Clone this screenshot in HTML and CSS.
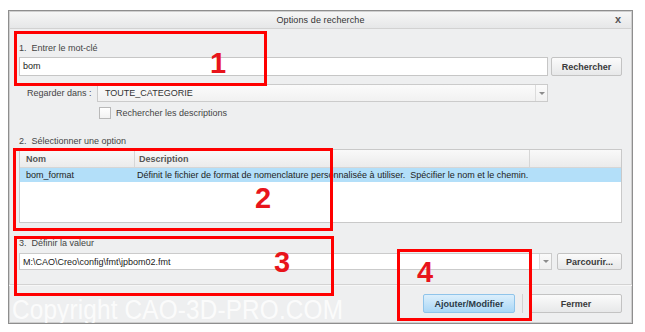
FILE: index.html
```html
<!DOCTYPE html>
<html lang="fr">
<head>
<meta charset="utf-8" />
<title>Options de recherche</title>
<link rel="stylesheet" href="styles.css">
</head>
<body>
<div class="page">
  <div class="dlg">
    <div class="titlebar">
      <span class="title">Options de recherche</span>
      <span class="close">x</span>
    </div>
    <div class="body">
      <div class="step">1.&nbsp; Entrer le mot-clé</div>
      <div class="row">
        <div class="field grow">bom</div>
        <div class="btn search">Rechercher</div>
      </div>
      <div class="row look">
        <span class="lbl">Regarder dans :</span>
        <div class="combo grow"><span class="val">TOUTE_CATEGORIE</span><span class="arrow"></span></div>
      </div>
      <div class="check"><span class="box"></span>Rechercher les descriptions</div>

      <div class="step s2">2.&nbsp; Sélectionner une option</div>
      <div class="table">
        <div class="thead">
          <span class="c1">Nom</span><span class="c2">Description</span><span class="c3"></span>
        </div>
        <div class="tr sel">
          <span class="c1">bom_format</span><span class="c2">Définit le fichier de format de nomenclature personnalisée à utiliser.&nbsp; Spécifier le nom et le chemin.</span>
        </div>
      </div>

      <div class="step s3">3.&nbsp; Définir la valeur</div>
      <div class="row value">
        <div class="combo white grow"><span class="val">M:\CAO\Creo\config\fmt\jpbom02.fmt</span><span class="arrow"></span></div>
        <div class="btn browse">Parcourir...</div>
      </div>

      <div class="sep"></div>
      <div class="footer">
        <div class="btn primary">Ajouter/Modifier</div>
        <span class="vsep"></span>
        <div class="btn">Fermer</div>
      </div>
    </div>
    <div class="watermark">Copyright CAO-3D-PRO.COM</div>
  </div>

  <!-- annotations -->
  <div class="mark m1"></div>
  <div class="mark m2"></div>
  <div class="mark m3"></div>
  <div class="mark m4"></div>
  <span class="num n1">1</span>
  <span class="num n2">2</span>
  <span class="num n3">3</span>
  <span class="num n4">4</span>
</div>
</body>
</html>
```

FILE: styles.css
```css
body { margin: 0; background: #fff; font-family: "Liberation Sans", Arial, sans-serif; font-size: 9px; color: #333; }
.page { position: relative; width: 645px; height: 332px; padding: 10px 0 0 8px; box-sizing: border-box; }

.dlg { position: relative; width: 625px; height: 314px; box-sizing: border-box; border: 1px solid #8e8e8e; box-shadow: inset 0 0 0 1px #cfcfcf; background: #eeeff0; overflow: hidden; }
.titlebar { position: relative; height: 16px; margin: 1px 1px 0 1px; background: linear-gradient(#f6f6f6, #e6e7e8); border-bottom: 1px solid #d2d2d2; display: flex; align-items: center; justify-content: center; }
.title { font-size: 9px; color: #333; letter-spacing: .1px; }
.close { position: absolute; right: 10px; top: 1px; font-weight: bold; font-size: 11px; color: #555; }

.body { padding: 0 10px 0 10px; }
.step { height: 12px; line-height: 12px; color: #444; }
.body > .step:first-child { margin-top: 13px; }
.row { display: flex; gap: 3px; margin-top: 3px; }
.grow { flex: 1; }
.field { height: 19px; box-sizing: border-box; border: 1px solid #c6c6c6; background: #fff; padding-left: 3px; line-height: 17px; color: #222; }
.btn { box-sizing: border-box; height: 19px; border: 1px solid #c3c3c3; border-radius: 2px; background: linear-gradient(#fbfbfb, #e7e8e9); font-weight: bold; color: #3a3a3a; display: flex; align-items: center; justify-content: center; }
.search { width: 71px; }

.look { margin-top: 8px; margin-right: 74px; gap: 0; padding-left: 8px; align-items: center; }
.lbl { width: 70px; color: #444; }
.combo { height: 18px; box-sizing: border-box; border: 1px solid #cbcbcb; background: linear-gradient(#fbfbfb, #f1f1f1); display: flex; align-items: center; }
.combo .val { flex: 1; padding-left: 7px; color: #333; }
.combo .arrow { width: 11px; height: 100%; border-left: 1px solid #dcdcdc; position: relative; }
.combo .arrow::after { content: ""; position: absolute; left: 3px; top: 7px; border-left: 3px solid transparent; border-right: 3px solid transparent; border-top: 3px solid #8c8c8c; }

.check { display: flex; align-items: center; gap: 5px; margin: 5px 0 0 80px; height: 12px; color: #444; }
.check .box { width: 12px; height: 12px; box-sizing: border-box; border: 1px solid #b9b9b9; background: linear-gradient(#fff, #f2f2f2); }

.s2 { margin-top: 16px; }
.table { margin-top: 2px; height: 74px; box-sizing: border-box; border: 1px solid #c9c9c9; background: #fff; }
.thead { display: flex; height: 18px; box-sizing: border-box; background: linear-gradient(#f9f9f9, #ebebeb); border-bottom: 1px solid #d6d6d6; font-weight: bold; color: #555; }
.thead span { display: flex; align-items: center; box-sizing: border-box; border-right: 1px solid #d6d6d6; }
.c1 { width: 115px; padding-left: 6px; box-sizing: border-box; }
.c2 { width: 395px; padding-left: 4px; box-sizing: border-box; white-space: nowrap; }
.c3 { flex: 1; border-right: none !important; }
.tr { display: flex; height: 14px; line-height: 14px; color: #222; }
.tr .c2 { width: auto; padding-left: 2px; }
.sel { background: #b3dff9; }

.s3 { margin-top: 14px; }
.value { margin-top: 4px; gap: 5px; }
.value .combo { height: 17px; }
.combo.white { background: #fff; }
.combo.white .val { padding-left: 3px; color: #222; }
.combo.white .arrow { background: linear-gradient(#fafafa, #efefef); }
.combo.white .arrow::after { top: 6px; }
.browse { height: 17px; width: 65px; }

.sep { margin: 14px -10px 0 -10px; height: 1px; background: #d3d3d3; border-bottom: 1px solid #f7f7f7; }
.footer { display: flex; justify-content: flex-end; align-items: center; gap: 7px; margin-top: 8px; }
.footer .btn { width: 92px; }
.footer .btn.primary { background: linear-gradient(#dceffc, #a9d7f6); border-color: #8fc4ea; color: #2b3a48; }
.vsep { width: 1px; height: 19px; background: #d2d2d2; }

.watermark { position: absolute; left: 3px; top: 284px; font-size: 27px; color: rgba(255, 255, 255, .8); transform: scaleX(.9); transform-origin: left; white-space: nowrap; letter-spacing: .2px; }

.mark { position: absolute; border: 3px solid #f00; box-sizing: border-box; }
.m1 { left: 14px; top: 31px; width: 253px; height: 55px; }
.m2 { left: 13px; top: 148px; width: 320px; height: 83px; }
.m3 { left: 14px; top: 236px; width: 320px; height: 60px; }
.m4 { left: 397px; top: 249px; width: 135px; height: 72px; }
.num { position: absolute; font-weight: bold; font-size: 29px; line-height: 1; color: #e8141b; }
.n1 { left: 210px; top: 49px; }
.n2 { left: 255px; top: 184px; }
.n3 { left: 274px; top: 248px; }
.n4 { left: 417px; top: 258px; }
```
